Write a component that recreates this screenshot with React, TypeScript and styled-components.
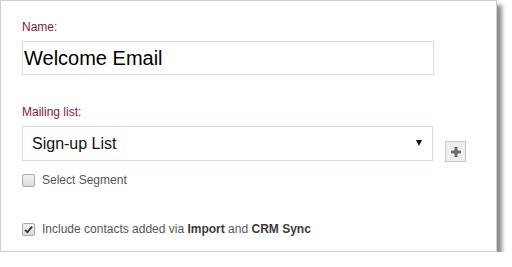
import React from "react";
import styled, { createGlobalStyle } from "styled-components";

const Global = createGlobalStyle`
  html, body { margin: 0; padding: 0; background: #fff; }
  body { font-family: "Liberation Sans", Arial, sans-serif; }
`;

const Panel = styled.div`
  box-sizing: border-box;
  width: 497px;
  height: 252px;
  background: #fff;
  border: 1px solid #cfcfcf;
  box-shadow: 5px 5px 4px rgba(0, 0, 0, 0.45);
  padding: 19px 21px 0;
`;

const Label = styled.div<{ gap?: number }>`
  font-size: 12px;
  line-height: 14px;
  color: #8a1538;
  margin-top: ${({ gap }) => gap ?? 0}px;
  margin-bottom: 7px;
`;

const TextField = styled.div`
  box-sizing: border-box;
  width: 412px;
  height: 34px;
  border: 1px solid #d3dae2;
  padding: 0 1px;
  display: flex;
  align-items: center;
  font-size: 20px;
  color: #000;
`;

const SelectRow = styled.div`
  display: flex;
  align-items: flex-end;
  gap: 12px;
`;

const Select = styled.div`
  box-sizing: border-box;
  width: 411px;
  height: 35px;
  border: 1px solid #d3dae2;
  padding: 0 10px 0 9px;
  display: flex;
  align-items: center;
  justify-content: space-between;
  font-size: 16px;
  color: #111;
`;

const Arrow = styled.span`
  width: 0;
  height: 0;
  border-left: 3px solid transparent;
  border-right: 3px solid transparent;
  border-top: 6px solid #111;
  margin-top: -2px;
`;

const PlusButton = styled.div`
  box-sizing: border-box;
  width: 21px;
  height: 21px;
  margin-bottom: -1px;
  border: 1px solid #c8c8c8;
  background: #efefef;
  display: flex;
  align-items: center;
  justify-content: center;
`;

const CheckRow = styled.label<{ gap: number }>`
  display: flex;
  align-items: center;
  gap: 7px;
  margin-top: ${({ gap }) => gap}px;
  font-size: 12px;
  line-height: 14px;
  color: #555;
  b { color: #3a3a3a; }
`;

const Box = styled.span`
  box-sizing: border-box;
  width: 13px;
  height: 13px;
  border: 1px solid #a9a9a9;
  border-radius: 2px;
  background: linear-gradient(#f2f2f2, #dcdcdc);
  display: flex;
  align-items: center;
  justify-content: center;
`;

const Check = () => (
  <svg width="9" height="9" viewBox="0 0 9 9" aria-hidden>
    <path d="M1 4.8 L3.4 7.2 L8 1.6" fill="none" stroke="#333" strokeWidth="1.8" />
  </svg>
);

const Plus = () => (
  <svg width="10" height="10" viewBox="0 0 10 10" aria-hidden>
    <path d="M3.5 0h3v3.5h3.5v3h-3.5v3.5h-3v-3.5h-3.5v-3h3.5z" fill="#6b6b6b" />
  </svg>
);

export default function App() {
  return (
    <>
      <Global />
      <Panel>
        <Label>Name:</Label>
        <TextField>Welcome Email</TextField>
        <Label gap={30}>Mailing list:</Label>
        <SelectRow>
          <Select>
            <span>Sign-up List</span>
            <Arrow />
          </Select>
          <PlusButton>
            <Plus />
          </PlusButton>
        </SelectRow>
        <CheckRow gap={12}>
          <Box />
          Select Segment
        </CheckRow>
        <CheckRow gap={35}>
          <Box>
            <Check />
          </Box>
          <span>
            Include contacts added via <b>Import</b> and <b>CRM Sync</b>
          </span>
        </CheckRow>
      </Panel>
    </>
  );
}
